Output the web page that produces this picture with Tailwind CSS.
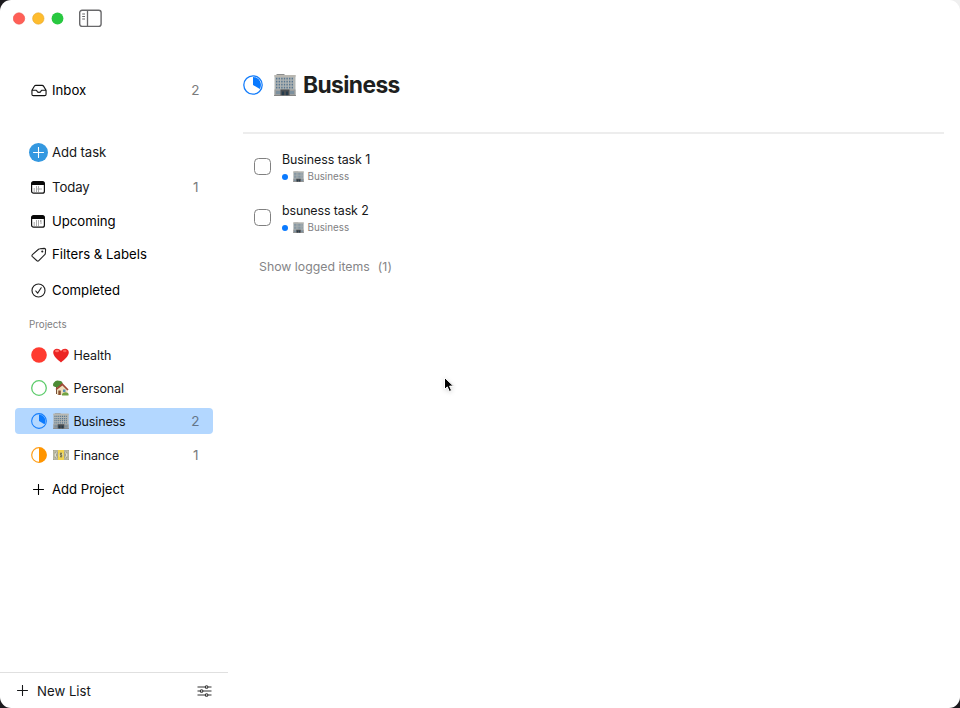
<!DOCTYPE html>
<html lang="en">
<head>
<meta charset="utf-8">
<title>Business</title>
<script src="https://cdn.jsdelivr.net/npm/@tailwindcss/browser@4"></script>
</head>
<body class="bg-linear-to-r from-[#1c1a1e] from-50% to-[#efefef] to-50% font-['Inter','Liberation_Sans',sans-serif] text-[#161719]">
<svg class="hidden">
  <symbol id="building" viewBox="0 0 22 22">
    <path d="M2.500 0h8v1h-8z" fill="#8b8d8e"/>
    <path d="M.5 1h21v20.500h-21z" fill="#b2b6b4"/>
    <path d="M.5 1h21v1.800h-21z" fill="#b9b7b0"/>
    <path d="M2 4.600h18M2 7.600h18M2 10.600h18M2 13.600h18" stroke="#587690" stroke-width="1.700" stroke-dasharray="1.400 1.200"/>
    <path d="M.5 15.500h21v6h-21z" fill="#9b9d9d"/>
    <path d="M2 18.500h4.500M16 18.500h4" stroke="#7c909e" stroke-width="3"/>
    <path d="M6.500 15.500h9v6h-9z" fill="#4a4e52"/>
    <path d="M8 17.500h2v4h-2zM12 17.500h2v4h-2z" fill="#263c4c"/>
    <path d="M0 21h22v.8h-22z" fill="#777"/>
  </symbol>
  <symbol id="third" viewBox="0 0 20 20">
    <circle cx="10" cy="10" r="9.200" fill="none" stroke="#147dfb" stroke-width="1.300"/>
    <path d="M10 10V2a8 8 0 0 1 6.900 12z" fill="#0a7aff"/>
  </symbol>
  <symbol id="plus" viewBox="0 0 12 12"><path d="M6 .5v11M.5 6h11" stroke="currentColor" stroke-width="1.200" stroke-linecap="round"/></symbol>
</svg>
<div class="h-[708px] w-[960px] bg-linear-to-b from-transparent from-50% to-[#1c1a1e] to-50%">
<div class="relative flex h-[708px] w-[960px] overflow-hidden rounded-[11px] bg-white">
  <aside class="flex w-[228px] shrink-0 flex-col text-[13.2px] leading-[26px]">
    <header class="flex h-[37px] items-center pl-[12.500px]">
      <svg width="51" height="13" viewBox="0 0 51 13"><circle cx="6" cy="6.500" r="5.700" fill="#ff5f57" stroke="#ed554c" stroke-width=".6"/><circle cx="25.300" cy="6.500" r="5.700" fill="#febc2e" stroke="#e5a82b" stroke-width=".6"/><circle cx="44.500" cy="6.500" r="5.900" fill="#28c840"/></svg>
      <svg class="ml-[15.500px]" width="23" height="19" viewBox="0 0 23 19" fill="none" stroke="#68686a"><rect x=".7" y="1.200" width="21.400" height="16.200" rx="2.400" stroke-width="1.400"/><path d="M8.500 1.500v16" stroke-width="1.300"/><path d="M3.200 5h2.800M3.200 7.500h2.800M3.200 10h2.800" stroke-width="1.100"/></svg>
    </header>
    <nav class="flex flex-col px-[15px] pt-[40px]">
      <div class="flex h-[26px] items-center pr-[13.500px] pl-[15.500px] text-black">
        <svg width="16" height="13" viewBox="0 0 17 13" fill="none" stroke="#111" stroke-width="1.200" stroke-linejoin="round"><path d="M1 6.200 3.700 1.800Q4.200 1 5.200 1h6.600q1 0 1.500.8L16 6.200v4.300q0 1.500-1.500 1.500h-12Q1 12 1 10.500zM1 6.200h4.600q.4 0 .5.500a2.450 2.300 0 0 0 4.800 0q.1-.5.500-.5H16"/></svg>
        <span class="ml-[5.500px]">Inbox</span><span class="ml-auto text-[13.500px] text-[#7a7a7c]">2</span>
      </div>
      <div class="mt-[36px] flex h-[26px] items-center pl-[14px]">
        <span class="flex size-[19px] items-center justify-center rounded-full bg-[#3498e0] text-white"><svg width="11" height="11"><use href="#plus"/></svg></span>
        <span class="ml-[4px] tracking-[-0.1px]">Add task</span>
      </div>
      <div class="mt-[9px] flex h-[26px] items-center pr-[14.500px] pl-[16px]">
        <svg width="14" height="13" viewBox="0 0 14 13"><rect x=".6" y=".6" width="12.800" height="11.600" rx="2" fill="none" stroke="#111" stroke-width="1.200"/><path d="M.5 4V2.500q0-2 2-2h9q2 0 2 2V4z" fill="#080808"/><path d="M5 6h1M7 6h1M2.700 8h1M5 8h1M6.600 8h2M9.500 8h1M2.700 10h1M5 10h1M7 10h1" stroke="#444" stroke-width=".9"/></svg>
        <span class="ml-[7px] tracking-[-0.1px]">Today</span><span class="ml-auto text-[13.500px] text-[#7a7a7c]">1</span>
      </div>
      <div class="mt-[8px] flex h-[26px] items-center pl-[16px] text-black">
        <svg width="14" height="13" viewBox="0 0 14 13"><rect x=".6" y=".6" width="12.800" height="11.600" rx="2" fill="none" stroke="#111" stroke-width="1.200"/><path d="M.5 4V2.500q0-2 2-2h9q2 0 2 2V4z" fill="#080808"/><path d="M5 6h1M7 6h1M9 6h1.500M2.700 8h1M5 8h1M7 8h1M9.500 8h1M2.700 10h1M5 10h1M7 10h1" stroke="#444" stroke-width=".9"/></svg>
        <span class="ml-[7px] tracking-[-0.05px]">Upcoming</span>
      </div>
      <div class="mt-[7px] flex h-[26px] items-center pl-[15.500px] text-black">
        <svg class="relative top-px" width="16" height="16" viewBox="0 0 17 16" fill="none" stroke="#222" stroke-width="1.150" stroke-linejoin="round"><path d="M9.500 1.400 14 1q1.700 0 1.500 1.700l-.3 3.800q-.1.700-.6 1.200l-6.300 6.400q-1 1-2 0L1.500 9.700q-1-1 0-2L8 1.900q.7-.5 1.500-.5z"/><circle cx="12" cy="4.300" r=".55" fill="#222"/></svg>
        <span class="ml-[5.500px]">Filters &amp; Labels</span>
      </div>
      <div class="mt-[10px] flex h-[26px] items-center pl-[16px] text-black">
        <svg width="15" height="15" viewBox="0 0 15 15" fill="none" stroke="#222" stroke-width="1.150"><circle cx="7.500" cy="7.500" r="6.500"/><path d="m4.800 8 1.800 2.200 3.600-5.400" stroke-linecap="round" stroke-linejoin="round"/></svg>
        <span class="ml-[6px]">Completed</span>
      </div>
      <h2 class="mt-[9px] h-[26px] pl-[14px] text-[9.800px] text-[#7e7e80]">Projects</h2>
      <div class="mt-[4px] flex h-[26px] items-center pl-[15.500px] text-[12.500px]">
        <svg width="16" height="16"><circle cx="8" cy="8" r="7.800" fill="#ff3b30"/></svg>
        <svg class="ml-[6.500px]" width="16" height="15" viewBox="0 0 16 15"><path d="M8 14.500C4.500 11.500.2 8.300.2 4.300.2.300 5.600-.8 8 3c2.400-3.800 7.800-2.700 7.800 1.300 0 4-4.300 7.200-7.800 10.200z" fill="#ec2524"/><ellipse cx="4" cy="3" rx="2" ry="1.300" fill="#ff7268"/><ellipse cx="11.800" cy="3" rx="1.800" ry="1.200" fill="#ff5b52"/></svg>
        <span class="ml-[4.600px] pt-[2px] tracking-[-0.1px]">Health</span>
      </div>
      <div class="mt-[7px] flex h-[26px] items-center pl-[15.500px] text-[12.500px]">
        <svg width="16" height="16"><circle cx="8" cy="8" r="7.300" fill="none" stroke="#5dcc6c" stroke-width="1.300"/></svg>
        <svg class="ml-[6.500px]" width="16" height="16" viewBox="0 0 16 16"><path d="M3 6h1.500v8H3z" fill="#765039"/><path d="M1 2.500Q3-.4 6 .8q3.500 0 3.500 2.600Q8 7.500 4 7.200 0 7 0 5q0-1.700 1-2.500z" fill="#4c8b35"/><path d="M4 8.500 9.500 4l5 5v6H4z" fill="#f0dfbd"/><path d="m2.500 9 6.800-6 6.300 6.500-1.200 1-5-5L3.600 10z" fill="#9e4936"/><path d="M5.300 10.500h2.500V15H5.300z" fill="#875234"/><path d="M10 9.500h2.500V12H10z" fill="#5a91b2"/><path d="M9 14q2-3 6-1 1 1 .5 2.500H9z" fill="#71a342"/></svg>
        <span class="ml-[4.600px] pt-[2px] tracking-[-0.15px]">Personal</span>
      </div>
      <div class="mt-[7px] flex h-[26px] items-center rounded-[4px] bg-[#b3d7ff] pr-[13.500px] pl-[15.500px] text-[12.500px]">
        <svg width="16" height="16"><use href="#third"/></svg>
        <svg class="ml-[6.500px]" width="16" height="16"><use href="#building"/></svg>
        <span class="ml-[4.600px] pt-[2px] tracking-[-0.15px]">Business</span><span class="ml-auto text-[13.500px] text-[#647589]">2</span>
      </div>
      <div class="mt-[8px] flex h-[26px] items-center pr-[14.500px] pl-[15.500px] text-[12.500px]">
        <svg width="16" height="16" viewBox="0 0 16 16"><circle cx="8" cy="8" r="7.300" fill="none" stroke="#ff9f1a" stroke-width="1.200"/><path d="M8 .5a7.500 7.500 0 0 1 0 15z" fill="#ff9500"/></svg>
        <svg class="ml-[6.500px]" width="16" height="10" viewBox="0 0 16 10"><path d="M0 0h16v10H0z" fill="#a5a58f"/><path d="M1 1h14v8H1z" fill="none" stroke="#d2d1bd" stroke-width=".7"/><path d="M3.500 2.500q-3 2.500 0 5M12.500 2.500q3 2.500 0 5" fill="none" stroke="#eeeedf"/><path d="M5 0h6v10H5z" fill="#f0d34d"/><circle cx="8" cy="5" r="2.400" fill="#ded7a0"/><path d="M9 3.500q-2-.7-2 .5c0 1 2 .8 2 2 0 1-1 .8-2 .4M8 2.500v5" fill="none" stroke="#65602e" stroke-width=".8"/></svg>
        <span class="ml-[4.600px] pt-[2px] tracking-[-0.15px]">Finance</span><span class="ml-auto text-[13.500px] text-[#7a7a7c]">1</span>
      </div>
      <div class="mt-[8px] flex h-[26px] items-center pl-[18px] text-black">
        <svg width="11" height="11"><use href="#plus"/></svg>
        <span class="ml-[8px] tracking-[-0.05px]">Add Project</span>
      </div>
    </nav>
    <footer class="mt-auto flex h-[36px] items-center border-t border-[#e0e0e0] pr-[16px] pl-[17px]">
      <svg width="11" height="11"><use href="#plus"/></svg>
      <span class="ml-[9px]">New List</span>
      <svg class="ml-auto" width="15" height="12" viewBox="0 0 15 12" fill="none" stroke="#333" stroke-width="1.100"><path d="M.5 2h7.700M11 2h3.500M.5 6h2.700M6 6h8.500M.5 10h7.700M11 10h3.500"/><circle cx="9.600" cy="2" r="1.300"/><circle cx="4.600" cy="6" r="1.300"/><circle cx="9.600" cy="10" r="1.300"/></svg>
    </footer>
  </aside>
  <main class="flex flex-1 flex-col pt-[69px] pr-[16px] pl-[15px]">
    <header class="flex h-[65px] items-start border-b-2 border-[#ededed]">
      <div class="flex h-8 items-center">
        <svg width="20" height="20"><use href="#third"/></svg>
        <svg class="ml-[11px]" width="22" height="22"><use href="#building"/></svg>
        <h1 class="ml-[7px] text-[22.800px] font-bold tracking-[-0.6px] text-[#1e1f20]">Business</h1>
      </div>
    </header>
    <ul class="flex flex-col pt-[16px] pl-[11px]">
      <li class="flex h-[51px]">
        <span class="mt-[8px] size-[17px] rounded-[4.500px] border-[1.500px] border-[#808080]"></span>
        <div class="ml-[11px] pt-px">
          <p class="h-[18px] text-[12.400px] leading-[18px] tracking-[-0.05px]">Business task 1</p>
          <p class="flex h-[15px] items-center text-[9.800px] text-[#808082]"><i class="size-[6px] rounded-full bg-[#0a7aff]"></i><svg class="mr-[3.500px] ml-[5px]" width="11" height="11"><use href="#building"/></svg><span class="pt-px">Business</span></p>
        </div>
      </li>
      <li class="flex h-[51px]">
        <span class="mt-[8px] size-[17px] rounded-[4.500px] border-[1.500px] border-[#808080]"></span>
        <div class="ml-[11px] pt-px">
          <p class="h-[18px] text-[12.400px] leading-[18px] tracking-[-0.1px]">bsuness task 2</p>
          <p class="flex h-[15px] items-center text-[9.800px] text-[#808082]"><i class="size-[6px] rounded-full bg-[#0a7aff]"></i><svg class="mr-[3.500px] ml-[5px]" width="11" height="11"><use href="#building"/></svg><span class="pt-px">Business</span></p>
        </div>
      </li>
    </ul>
    <p class="mt-[5px] flex pl-[16px] text-[12.300px] leading-[20px] text-[#858587]"><span>Show logged items</span><span class="ml-[8px] tracking-[0.1px]">(1)</span></p>
  </main>
  <svg class="absolute top-[376px] left-[443px] drop-shadow-sm" width="12" height="18" viewBox="0 0 12 18"><path d="M1.500 1.500v12l2.800-2.600 2 4.600 2.300-1-2-4.400h3.900z" fill="#000" stroke="#fff" stroke-width="1"/></svg>
</div>
</div>
</body>
</html>
